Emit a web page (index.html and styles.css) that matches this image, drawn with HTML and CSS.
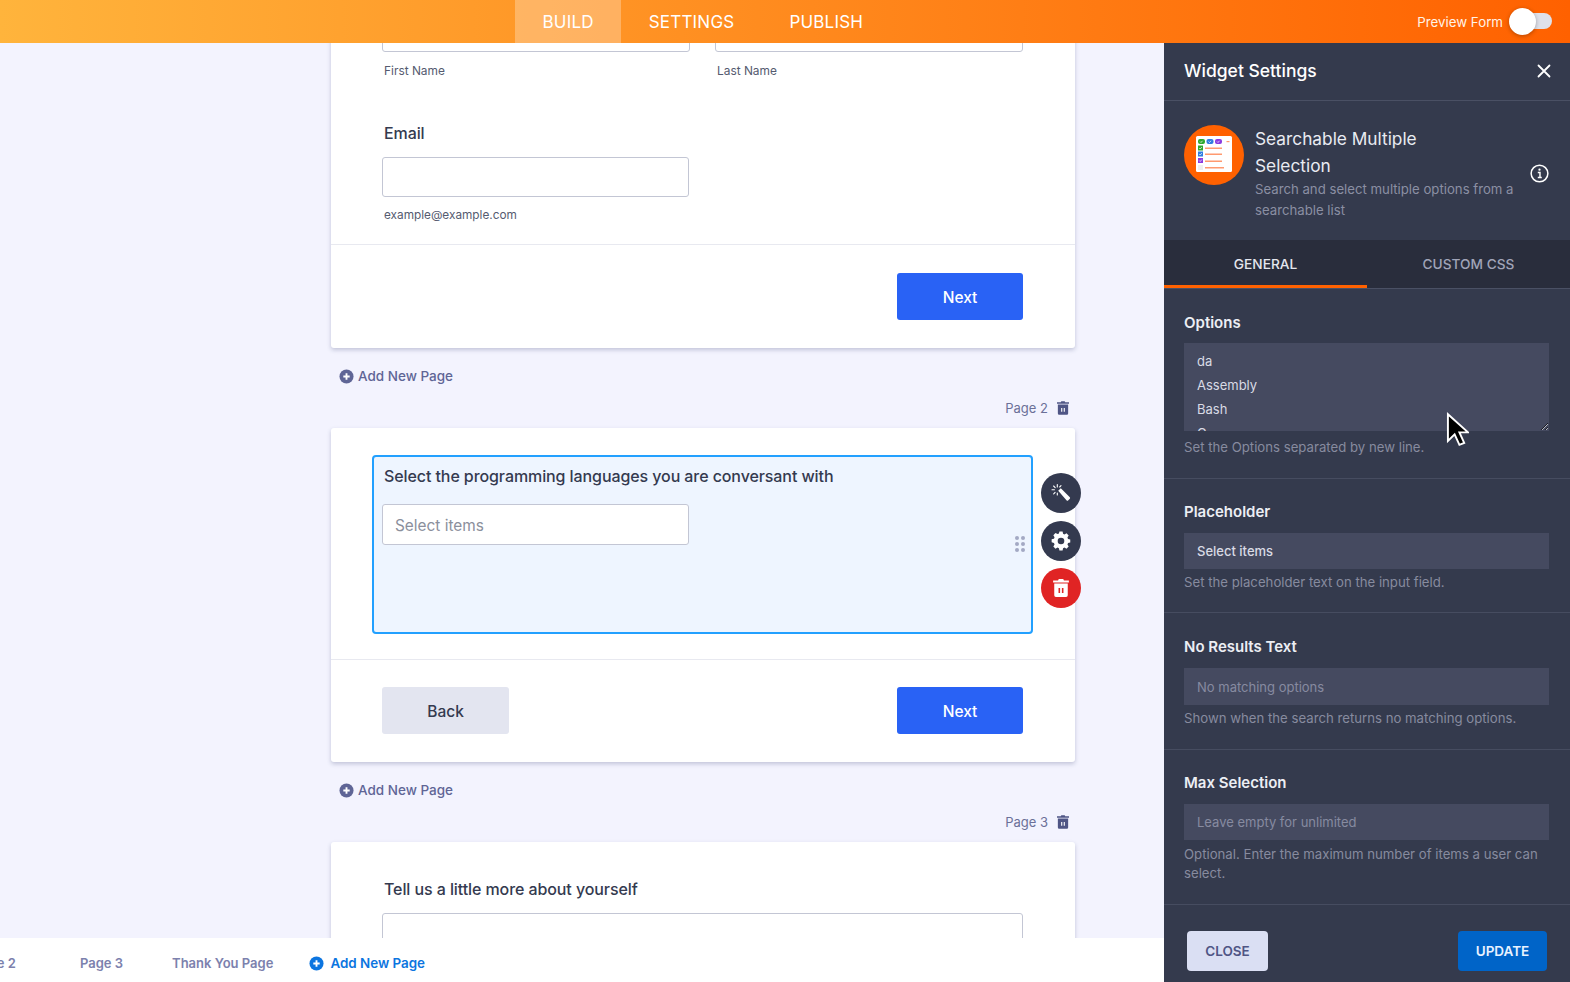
FILE: index.html
```html
<!DOCTYPE html>
<html lang="en">
<head>
<meta charset="utf-8">
<title>Form Builder</title>
<link rel="stylesheet" href="styles.css">
</head>
<body>
<div class="app">
  <header class="topbar">
    <nav class="nav">
      <a class="nav-item active">BUILD</a>
      <a class="nav-item">SETTINGS</a>
      <a class="nav-item">PUBLISH</a>
    </nav>
    <div class="preview">
      <span>Preview Form</span>
      <span class="switch"><span class="knob"></span></span>
    </div>
  </header>
  <div class="workspace">
    <main class="main">
      <div class="canvas">
        <section class="card first">
          <div class="name-row">
            <div class="name-col"><div class="input"></div><div class="sub">First Name</div></div>
            <div class="name-col"><div class="input"></div><div class="sub">Last Name</div></div>
          </div>
          <div class="email">
            <div class="q">Email</div>
            <div class="input tall"></div>
            <div class="sub near">example@example.com</div>
          </div>
          <div class="card-foot end"><button class="btn primary">Next</button></div>
        </section>

        <div class="add-page">
          <svg class="plus" viewBox="0 0 16 16"><circle cx="8" cy="8" r="7.500" fill="#5f6596"/><path d="M8 4.600v6.800M4.600 8h6.800" stroke="#fff" stroke-width="2"/></svg>
          <span>Add New Page</span>
        </div>
        <div class="page-label">
          <span>Page 2</span>
          <svg class="trash" viewBox="0 0 14 16"><path d="M5 0h4l.6 1.400H14V3H0V1.400h4.400zM1 4h12v10.500a1.500 1.500 0 0 1-1.500 1.500h-9A1.500 1.500 0 0 1 1 14.500z" fill="#4f5585"/><path d="M5.500 8v4.500M8.500 8v4.500" stroke="#fff" stroke-width="1.300"/></svg>
        </div>

        <section class="card">
          <div class="body">
            <div class="widget">
              <div class="q widget-q">Select the programming languages you are conversant with</div>
              <div class="input select">Select items</div>
              <svg class="drag" viewBox="0 0 10 16"><g fill="#a3a9c4"><circle cx="2" cy="2" r="2"/><circle cx="8" cy="2" r="2"/><circle cx="2" cy="8" r="2"/><circle cx="8" cy="8" r="2"/><circle cx="2" cy="14" r="2"/><circle cx="8" cy="14" r="2"/></g></svg>
              <div class="actions">
                <span class="action">
                  <svg viewBox="0 0 20 20" width="20" height="20"><path d="M7.200 7.800l2.600-2.600L18.800 14.300a1 1 0 0 1 0 1.400l-1.700 1.700a1 1 0 0 1-1.400 0z" fill="#fff"/><g stroke="#fff" stroke-width="1.100" stroke-linecap="round"><path d="M6.300 1.500v2.400M1 6.800h2.400M2.600 3l1.600 1.700M10 2.700L8.700 4M2.700 10.800L4.100 9.400M6.300 10v2"/></g></svg>
                </span>
                <span class="action">
                  <svg viewBox="0 0 20 20" width="22" height="22"><path fill="#fff" fill-rule="evenodd" d="M8.300 1h3.400l.5 2.400 1.500.7 2.200-1.200 2.300 2.400-1.300 2.100.6 1.600 2.400.5v3.200l-2.400.6-.6 1.500 1.300 2.100-2.300 2.400-2.200-1.300-1.500.7-.5 2.400H8.300l-.5-2.400-1.500-.7-2.200 1.300-2.300-2.400 1.300-2.100-.6-1.500L0 12.300V9.100l2.500-.5.600-1.600-1.300-2.100 2.300-2.400 2.200 1.200 1.500-.7z" transform="translate(1.500 .6) scale(.85)"/><circle cx="10" cy="10" r="3" fill="#343a4f"/></svg>
                </span>
                <span class="action danger">
                  <svg viewBox="0 0 14 16" width="16" height="18"><path d="M5 0h4l.6 1.400H14V3H0V1.400h4.400zM1 4h12v10.500a1.500 1.500 0 0 1-1.500 1.500h-9A1.500 1.500 0 0 1 1 14.500z" fill="#fff"/><path d="M5.500 8v4.500M8.500 8v4.500" stroke="#e02424" stroke-width="1.400"/></svg>
                </span>
              </div>
            </div>
          </div>
          <div class="card-foot between">
            <button class="btn ghost">Back</button>
            <button class="btn primary">Next</button>
          </div>
        </section>

        <div class="add-page">
          <svg class="plus" viewBox="0 0 16 16"><circle cx="8" cy="8" r="7.500" fill="#5f6596"/><path d="M8 4.600v6.800M4.600 8h6.800" stroke="#fff" stroke-width="2"/></svg>
          <span>Add New Page</span>
        </div>
        <div class="page-label">
          <span>Page 3</span>
          <svg class="trash" viewBox="0 0 14 16"><path d="M5 0h4l.6 1.400H14V3H0V1.400h4.400zM1 4h12v10.500a1.500 1.500 0 0 1-1.500 1.500h-9A1.500 1.500 0 0 1 1 14.500z" fill="#4f5585"/><path d="M5.500 8v4.500M8.500 8v4.500" stroke="#fff" stroke-width="1.300"/></svg>
        </div>

        <section class="card last">
          <div class="q third-q">Tell us a little more about yourself</div>
          <div class="input wide"></div>
        </section>
      </div>
      <footer class="pagebar">
        <span class="pagetab cut">Page 2</span>
        <span class="pagetab">Page 3</span>
        <span class="pagetab">Thank You Page</span>
        <span class="pagetab add">
          <svg class="plus" viewBox="0 0 16 16"><circle cx="8" cy="8" r="7.500" fill="#0c75e0"/><path d="M8 4.600v6.800M4.600 8h6.800" stroke="#fff" stroke-width="2"/></svg>
          Add New Page
        </span>
      </footer>
    </main>

    <aside class="panel">
      <div class="panel-head">
        <span>Widget Settings</span>
        <svg class="close" viewBox="0 0 14 14"><path d="M1.500 1.500l11 11M12.500 1.500l-11 11" stroke="#fff" stroke-width="1.800" stroke-linecap="round"/></svg>
      </div>
      <div class="info">
        <svg class="logo" viewBox="0 0 60 60">
          <circle cx="30" cy="30" r="30" fill="#ff6100"/>
          <rect x="12" y="11" width="36" height="36" rx="1.500" fill="#fff"/>
          <rect x="14" y="14" width="7" height="5" rx="2" fill="#2ea82e"/>
          <rect x="22.500" y="14" width="7" height="5" rx="2" fill="#2f7de0"/>
          <rect x="31" y="14" width="7" height="5" rx="2" fill="#8a3be0"/>
          <rect x="14" y="20.500" width="5" height="5" fill="#2ea82e"/>
          <rect x="14" y="26.500" width="5" height="5" fill="#2f7de0"/>
          <rect x="14" y="33" width="5" height="5" fill="#8a3be0"/>
          <rect x="14" y="40" width="5" height="5" fill="#efefef"/>
          <path d="M15.200 23l1 1 1.600-1.900M15.200 29l1 1 1.600-1.900M15.200 35.500l1 1 1.600-1.900M16 16.500l1 1 1.500-1.700M24.500 16.500l1 1 1.500-1.700M33 16.500l1 1 1.500-1.700" fill="none" stroke="#fff" stroke-width=".7"/>
          <g fill="#ff9a70">
            <rect x="21" y="22.500" width="17" height="1.500"/>
            <rect x="21" y="28.500" width="17" height="1.500"/>
            <rect x="21" y="35.500" width="17" height="1.500"/>
            <rect x="21" y="42" width="19" height="1.500"/>
            <rect x="42.500" y="16" width="3" height="1.200"/>
          </g>
        </svg>
        <div class="info-text">
          <div class="info-title">Searchable Multiple Selection</div>
          <div class="info-desc">Search and select multiple options from a searchable list</div>
        </div>
        <svg class="info-icon" viewBox="0 0 20 20"><circle cx="10" cy="10" r="8.800" fill="none" stroke="#fff" stroke-width="1.600"/><path d="M8.200 9h2.300v5.200M8.200 14.300h4.200" fill="none" stroke="#fff" stroke-width="1.500"/><circle cx="10" cy="6" r="1.200" fill="#fff"/></svg>
      </div>
      <div class="tabs">
        <div class="tab on">GENERAL</div>
        <div class="tab">CUSTOM CSS</div>
      </div>
      <div class="settings">
        <div class="field f1">
          <div class="field-label">Options</div>
          <textarea class="area" readonly>da
Assembly
Bash
C
C++</textarea>
          <div class="help">Set the Options separated by new line.</div>
        </div>
        <div class="field">
          <div class="field-label">Placeholder</div>
          <div class="box value">Select items</div>
          <div class="help">Set the placeholder text on the input field.</div>
        </div>
        <div class="field f3">
          <div class="field-label">No Results Text</div>
          <div class="box">No matching options</div>
          <div class="help">Shown when the search returns no matching options.</div>
        </div>
        <div class="field f4">
          <div class="field-label">Max Selection</div>
          <div class="box">Leave empty for unlimited</div>
          <div class="help">Optional. Enter the maximum number of items a user can select.</div>
        </div>
      </div>
      <div class="panel-foot">
        <button class="pbtn light">CLOSE</button>
        <button class="pbtn blue">UPDATE</button>
      </div>
    </aside>
  </div>
  <svg class="cursor" viewBox="0 0 24 36"><path d="M2 2v28l7-7 5 11 5-2-5-11h9z" fill="#000" stroke="#fff" stroke-width="2"/></svg>
</div>
</body>
</html>
```

FILE: styles.css
```css
* { box-sizing: border-box; }
html, body { margin: 0; height: 100%; overflow: hidden; }
body { font-family: Inter, "Noto Sans", sans-serif; color: #343a4f; background: #f3f3fe; }
.app { position: relative; height: 982px; display: flex; flex-direction: column; overflow: hidden; }

.topbar { height: 43px; flex: none; display: flex; align-items: center; justify-content: space-between;
  background: linear-gradient(90deg, #ffb43c 0%, #ff6100 100%); color: #fff; position: relative; z-index: 3; }
.nav { display: flex; height: 100%; margin-left: 515px; }
.nav-item { height: 100%; display: flex; align-items: center; padding: 1px 27.5px 0; font-size: 17px; letter-spacing: .2px; color: #fff; }
.nav-item.active { background: rgba(255,255,255,.28); }
.preview { display: flex; align-items: center; gap: 6px; padding-right: 18px; font-size: 13.300px; color: #fff3e8; }
.switch { position: relative; width: 43px; height: 27px; display: block; }
.switch::before { content: ""; position: absolute; left: 11px; right: 0; top: 5px; height: 16px; border-radius: 8px; background: #dfe1ea; }
.knob { position: absolute; left: 0; top: 0; width: 27px; height: 27px; border-radius: 50%; background: #fff; box-shadow: 0 1px 4px rgba(0,0,0,.3); }

.workspace { flex: 1; display: flex; min-height: 0; }
.main { flex: 1; min-width: 0; display: flex; flex-direction: column; background: #f3f3fe; }
.canvas { flex: 1; min-height: 0; overflow: hidden; padding-left: 331px; }

.card { width: 744px; background: #fff; border-radius: 3px; box-shadow: 0 2px 4px rgba(80,85,130,.3); }
.card.first { margin-top: -40px; padding-top: 10px; }
.name-row { display: flex; gap: 25px; padding: 0 52px 0 51px; }
.name-col { width: 308px; }
.input { height: 39px; background: #fff; border: 1px solid #c3c6d4; border-radius: 3px; }
.input.tall { height: 40px; width: 307px; }
.sub { font-size: 11.900px; line-height: 16px; margin: 11px 0 0 2px; color: #555b70; }
.sub.near { margin-top: 10px; font-size: 11.800px; }
.email { padding: 44px 0 21px 51px; border-bottom: 1px solid #e8e9f0; }
.q { font-size: 16px; line-height: 20px; font-weight: 500; color: #343a4f; letter-spacing: -.09px; }
.email .q { margin: 0 0 14px 2px; }
.card-foot { padding: 28px 52px 28px 51px; display: flex; }
.card-foot.end { justify-content: flex-end; }
.card-foot.between { justify-content: space-between; padding: 27px 52px 28px 51px; }
.btn { width: 127px; height: 47px; padding: 1px 0 0; border: 0; border-radius: 3px; font: 500 15.500px Inter, sans-serif; }
.btn.primary { width: 126px; background: #2962f5; color: #fff; }
.btn.ghost { background: #e3e5f0; color: #343a4f; }

.add-page { display: flex; align-items: center; gap: 4px; margin: 18px 0 0 8px; height: 20px; font-size: 13.500px; font-weight: 500; color: #5f6596; }
.plus { width: 15px; height: 15px; flex: none; }
.page-label { display: flex; justify-content: flex-end; align-items: center; gap: 9px; width: 738px; height: 20px; margin-top: 12px; margin-bottom: 10px; font-size: 13px; color: #6b7098; }
.trash { width: 12px; height: 14px; }

.body { padding: 27px 42px 25px 41px; border-bottom: 1px solid #e8e9f0; }
.widget { position: relative; height: 179px; padding: 9px 8px; background: #eef5ff; border: 2px solid #22a0ff; border-radius: 4px; }
.widget-q { margin-left: 2px; }
.input.select { height: 41px; width: 307px; margin-top: 18px; padding: 2px 12px 0; display: flex; align-items: center; font-size: 15.400px; color: #8b8f9c; }
.drag { position: absolute; right: 6px; top: 79px; width: 10px; height: 16px; }
.actions { position: absolute; left: 667px; top: 16px; display: flex; flex-direction: column; gap: 7.500px; }
.action { width: 40px; height: 40px; border-radius: 50%; background: #343a4f; display: flex; align-items: center; justify-content: center; }
.action.danger { background: #e02424; }

.card.last { padding: 37px 52px 0 51px; height: 200px; }
.third-q { margin: 0 0 14px 2px; }
.input.wide { width: 641px; height: 60px; }

.pagebar { height: 44px; flex: none; display: flex; align-items: center; gap: 49px; background: #fff; padding-top: 6px; font-size: 13px; font-weight: 600; color: #7c81ad; position: relative; overflow: hidden; }
.pagetab { white-space: nowrap; }
.pagetab.cut { margin-left: -27px; margin-right: 15px; }
.pagetab.add { display: flex; align-items: center; gap: 6px; color: #0c75e0; margin-left: -13px; font-size: 13.400px; }

.panel { width: 406px; flex: none; background: #343a4d; color: #fff; display: flex; flex-direction: column; position: relative; z-index: 2; }
.panel-head { height: 58px; padding: 0 19px 2px 20px; display: flex; align-items: center; justify-content: space-between; font-size: 17.500px; font-weight: 500; border-bottom: 1px solid #4a5064; }
.close { width: 14px; height: 14px; }
.info { height: 139px; padding: 24px 21px 0 20px; display: flex; position: relative; }
.logo { width: 60px; height: 60px; flex: none; }
.info-text { margin-left: 11px; width: 270px; }
.info-title { font-size: 17.300px; line-height: 27px; color: #e9ebf2; width: 200px; }
.info-desc { font-size: 13.200px; line-height: 21px; color: #8b8fa3; }
.info-icon { position: absolute; right: 21px; top: 63px; width: 19px; height: 19px; }
.tabs { height: 49px; display: flex; background: #292d3c; border-bottom: 1px solid #4a5064; }
.tab { display: flex; align-items: center; justify-content: center; font-size: 13.700px; font-weight: 500; color: #a0a4b8; flex: 1; }
.tab.on { flex: none; width: 203px; padding-top: 2px; color: #e4e6ee; border-bottom: 3px solid #ff6100; }
.settings { flex: 1; min-height: 0; }
.field { padding: 23px 21px 20px 20px; border-bottom: 1px solid #464c60; }
.field.f1 { padding-top: 24px; padding-bottom: 20px; }
.field.f1 .field-label { margin-bottom: 10px; }
.field.f3 { padding-top: 24px; padding-bottom: 20px; }
.field.f3 .box { height: 37px; }
.field.f4 { padding-bottom: 20px; }
.field.f4 .help { margin-top: 5px; }
.field-label { font-size: 15px; line-height: 20px; font-weight: 600; color: #eceef4; margin-bottom: 11px; }
.area { display: block; width: 365px; height: 88px; padding: 6px 13px; border: 0; background: #454a60; color: #d9dbe5; font: 13px/24px Inter, sans-serif; overflow: hidden; resize: both; border-radius: 0; outline: 0; }
.box { width: 365px; height: 36px; padding: 0 13px; display: flex; align-items: center; background: #454a60; font-size: 13px; color: #878ba0; }
.box.value { color: #d9dbe5; font-weight: 500; }
.help { margin-top: 4px; font-size: 13.200px; line-height: 19.500px; color: #878b9f; }
.f1 .help { margin-top: 7px; }
.panel-foot { height: 77px; padding: 26px 23px 0; display: flex; justify-content: space-between; }
.pbtn { height: 40px; border: 0; border-radius: 4px; font: 600 13.500px Inter, sans-serif; }
.pbtn.light { width: 81px; background: #dadff3; color: #4f5585; }
.pbtn.blue { width: 89px; background: #0064c8; color: #e8f2ff; }

.cursor { position: absolute; left: 1446px; top: 412px; width: 23px; height: 35px; z-index: 5; }
```
